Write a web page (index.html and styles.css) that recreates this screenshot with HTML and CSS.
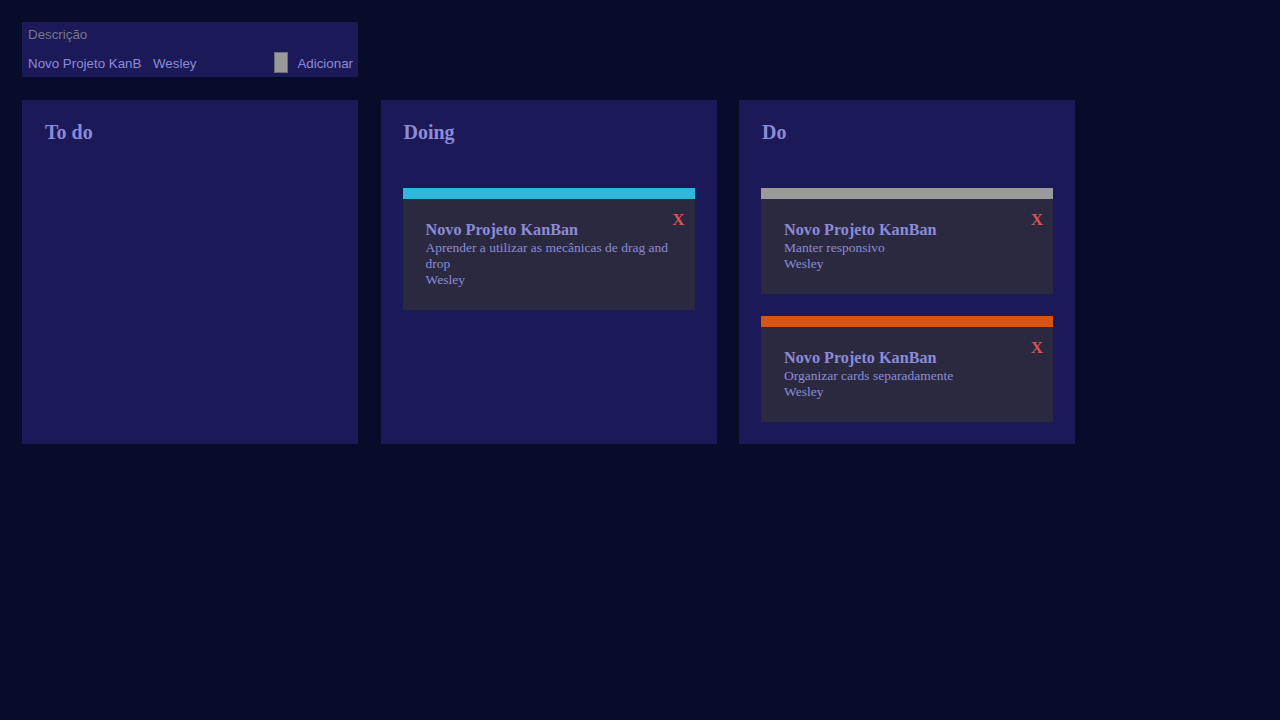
FILE: index.html
```html
<!DOCTYPE html>
<html lang="pt-BR">
<head>
<meta charset="utf-8">
<title>KanBan</title>
<link rel="stylesheet" href="styles.css">
</head>
<body>
<div class="page">
  <form class="new-card">
    <input class="field field-desc" type="text" placeholder="Descrição">
    <div class="row">
      <input class="field field-title" type="text" value="Novo Projeto KanBan">
      <input class="field field-author" type="text" value="Wesley">
      <span class="swatch"></span>
      <button class="add" type="button">Adicionar</button>
    </div>
  </form>

  <div class="board">
    <section class="column">
      <h2 class="column-title">To do</h2>
      <div class="cards"></div>
    </section>

    <section class="column">
      <h2 class="column-title">Doing</h2>
      <div class="cards">
        <article class="card card-cyan">
          <span class="close">X</span>
          <h3 class="card-title">Novo Projeto KanBan</h3>
          <p class="card-text">Aprender a utilizar as mecânicas de drag and drop</p>
          <p class="card-text">Wesley</p>
        </article>
      </div>
    </section>

    <section class="column">
      <h2 class="column-title">Do</h2>
      <div class="cards">
        <article class="card card-gray">
          <span class="close">X</span>
          <h3 class="card-title">Novo Projeto KanBan</h3>
          <p class="card-text">Manter responsivo</p>
          <p class="card-text">Wesley</p>
        </article>
        <article class="card card-orange">
          <span class="close">X</span>
          <h3 class="card-title">Novo Projeto KanBan</h3>
          <p class="card-text">Organizar cards separadamente</p>
          <p class="card-text">Wesley</p>
        </article>
      </div>
    </section>
  </div>
</div>
</body>
</html>
```

FILE: styles.css
```css
html, body {
  margin: 0;
  padding: 0;
  background: #060c29;
  height: 100%;
}

body {
  font-family: "Liberation Serif", "Times New Roman", serif;
  color: #8b8bd8;
}

.page {
  padding: 22px;
}

.new-card {
  width: 336px;
  box-sizing: border-box;
  background: #1b1957;
  padding: 2px 5px 3px 6px;
  display: flex;
  flex-direction: column;
  gap: 8px;
  margin-bottom: 23px;
}

.field {
  font-family: "Liberation Sans", Arial, sans-serif;
  font-size: 13.33px;
  color: #8b8bd8;
  background: transparent;
  border: none;
  outline: none;
  padding: 0;
  margin: 0;
  height: 21px;
  box-sizing: border-box;
}

.field::placeholder {
  color: #77778a;
}

.field-desc {
  width: 100%;
}

.row {
  display: flex;
  align-items: center;
  height: 21px;
}

.field-title {
  width: 114px;
  margin-right: 11px;
}

.field-author {
  flex: 1;
  min-width: 0;
}

.swatch {
  width: 14px;
  height: 21px;
  box-sizing: border-box;
  background: #9a9a9a;
  border: 1px solid #6e6e7a;
  margin-right: 9px;
  margin-top: -2px;
}

.add {
  font-family: "Liberation Sans", Arial, sans-serif;
  font-size: 13.33px;
  color: #8b8bd8;
  background: transparent;
  border: none;
  padding: 0;
  margin: 0;
  height: 21px;
  cursor: pointer;
}

.board {
  display: grid;
  grid-template-columns: repeat(3, 336px);
  column-gap: 22.5px;
  align-items: stretch;
}

.column {
  background: #1b1957;
  padding: 22px;
  box-sizing: border-box;
}

.column-title {
  margin: 0 0 46px 1px;
  font-size: 20px;
  line-height: 20px;
  font-weight: bold;
}

.cards {
  display: flex;
  flex-direction: column;
  gap: 22px;
}

.card {
  position: relative;
  background: #2b2940;
  border-top: 11px solid #2bb6dc;
  padding: 22px 22px 22px 23px;
}

.card-cyan { border-top-color: #2db8dc; }
.card-gray { border-top-color: #9a9a9a; }
.card-orange { border-top-color: #d9540f; }

.card-title {
  margin: 0;
  font-size: 16.2px;
  line-height: 18.5px;
  font-weight: bold;
}

.card-text {
  margin: 0;
  font-size: 13.5px;
  line-height: 16.3px;
}

.close {
  position: absolute;
  top: 11px;
  right: 10px;
  color: #d9534f;
  font-size: 17px;
  font-weight: bold;
  line-height: normal;
  cursor: pointer;
}
```
